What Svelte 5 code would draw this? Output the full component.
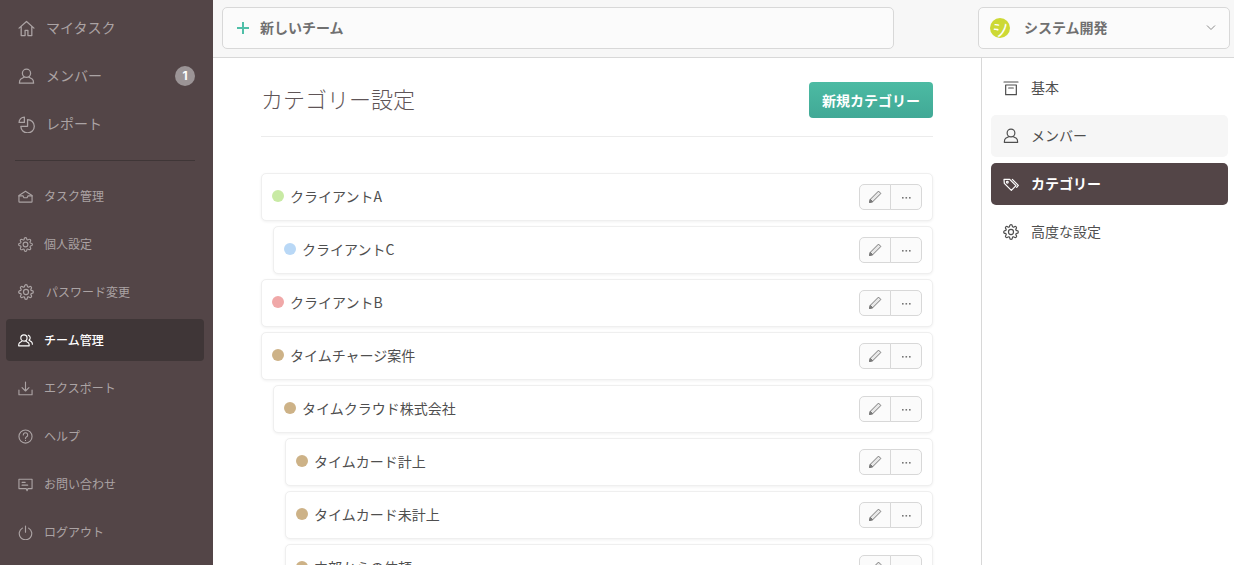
<script>
  const primary = [
    { icon: 'home', label: 'マイタスク' },
    { icon: 'user', label: 'メンバー', badge: 1 },
    { icon: 'pie', label: 'レポート' }
  ];
  const secondary = [
    { icon: 'inbox', label: 'タスク管理' },
    { icon: 'gear', label: '個人設定' },
    { icon: 'gear', label: 'パスワード変更', wide: true },
    { icon: 'team', label: 'チーム管理', active: true },
    { icon: 'download', label: 'エクスポート' },
    { icon: 'help', label: 'ヘルプ' },
    { icon: 'chat', label: 'お問い合わせ' },
    { icon: 'power', label: 'ログアウト' }
  ];
  const categories = [
    { label: 'クライアントA', color: '#c8eaa4', level: 0 },
    { label: 'クライアントC', color: '#b9d8f6', level: 1 },
    { label: 'クライアントB', color: '#f0a8a8', level: 0 },
    { label: 'タイムチャージ案件', color: '#cdb287', level: 0 },
    { label: 'タイムクラウド株式会社', color: '#cdb287', level: 1 },
    { label: 'タイムカード計上', color: '#cdb287', level: 2 },
    { label: 'タイムカード未計上', color: '#cdb287', level: 2 },
    { label: '内部からの依頼', color: '#cdb287', level: 2 }
  ];
  const settings = [
    { icon: 'archive', label: '基本' },
    { icon: 'user', label: 'メンバー', hover: true },
    { icon: 'tag', label: 'カテゴリー', active: true },
    { icon: 'gear', label: '高度な設定' }
  ];
</script>

{#snippet icon(name, size)}
  <svg class="ic" width={size} height={size} viewBox="0 0 24 24" fill="none" stroke="currentColor" stroke-width="1.8" stroke-linecap="round" stroke-linejoin="round">
    {#if name === 'home'}
      <path d="M1.500 11.500 12 2l10.500 9.500M4.500 9V22h5.500v-7.500h4V22h5.500V9" />
    {:else if name === 'user'}
      <circle cx="12" cy="7.500" r="5.800" />
      <path d="M8.500 13 4 15.500C2.500 16.500 2 18 2 21.500h20c0-3.500-.5-5-2-6L15.500 13" />
    {:else if name === 'pie'}
      <path d="M13.500 5a9.500 9.500 0 1 1-9.500 9.500h9.500z" />
      <path d="M9 1.500A7.500 7.500 0 0 0 1.500 9H9z" />
    {:else if name === 'inbox'}
      <path d="M1.500 10.500 12 3.500l10.500 7V20a1 1 0 0 1-1 1h-19a1 1 0 0 1-1-1z" />
      <path d="M1.500 11h6.500l1.500 3h5l1.500-3h6.500" />
    {:else if name === 'gear'}
      <circle cx="12" cy="12" r="3.800" />
      <path d="M19.400 15a1.650 1.650 0 0 0 .33 1.820l.06.06a2 2 0 0 1 0 2.830 2 2 0 0 1-2.830 0l-.06-.06a1.650 1.650 0 0 0-1.820-.33 1.650 1.650 0 0 0-1 1.510V21a2 2 0 0 1-2 2 2 2 0 0 1-2-2v-.09A1.650 1.650 0 0 0 9 19.400a1.650 1.650 0 0 0-1.820.33l-.06.06a2 2 0 0 1-2.830 0 2 2 0 0 1 0-2.830l.06-.06a1.650 1.650 0 0 0 .33-1.820 1.650 1.650 0 0 0-1.510-1H3a2 2 0 0 1-2-2 2 2 0 0 1 2-2h.09A1.650 1.650 0 0 0 4.600 9a1.650 1.650 0 0 0-.33-1.820l-.06-.06a2 2 0 0 1 0-2.830 2 2 0 0 1 2.830 0l.06.06a1.650 1.650 0 0 0 1.820.33H9a1.650 1.650 0 0 0 1-1.510V3a2 2 0 0 1 2-2 2 2 0 0 1 2 2v.09a1.650 1.650 0 0 0 1 1.510 1.650 1.650 0 0 0 1.820-.33l.06-.06a2 2 0 0 1 2.830 0 2 2 0 0 1 0 2.830l-.06.06a1.650 1.650 0 0 0-.33 1.820V9a1.650 1.650 0 0 0 1.510 1H21a2 2 0 0 1 2 2 2 2 0 0 1-2 2h-.09a1.650 1.650 0 0 0-1.510 1z" />
    {:else if name === 'team'}
      <circle cx="9.500" cy="8" r="5" />
      <path d="M6.500 13 2.500 15.500C1.500 16.500 1 18 1 20.500h17c0-2.500-.5-4-1.500-5L12.500 13" />
      <path d="M16.500 3.500a4.500 4.500 0 0 1 1 8l4 2.500c1 .8 1.500 2 1.500 4" />
    {:else if name === 'download'}
      <path d="M12 1.500v14M6.500 10.500l5.500 5.500 5.500-5.500" />
      <path d="M1.500 14.500V22h21v-7.500" />
    {:else if name === 'help'}
      <circle cx="12" cy="12" r="10.500" />
      <path d="M8.500 9.500a3.500 3.500 0 1 1 5.300 3c-1.200.7-1.800 1.300-1.800 2.500" />
      <path d="M12 18v.2" />
    {:else if name === 'chat'}
      <path d="M1.500 3.500h21v15h-6.500l-1.500 3.500-1.500-3.500H1.500z" />
      <path d="M6.500 8.500h5M6.500 13h9" />
    {:else if name === 'power'}
      <path d="M12 1.500v10" />
      <path d="M7 5a10 10 0 1 0 10 0" />
    {:else if name === 'archive'}
      <path d="M1.500 3h21M4 7.500h16V22H4z" />
      <path d="M8.500 12h7" />
    {:else if name === 'tag'}
      <path d="M1.500 5h8.500l9.500 9.500-7 7L2 11z" />
      <path d="M14 5l9 9-2.500 3" />
      <circle cx="6.500" cy="9.500" r="1.300" />
    {/if}
  </svg>
{/snippet}

<div class="shell">
  <aside class="sidebar">
    <nav class="nav">
      {#each primary as item}
        <div class="nav-item big">
          <span class="nav-icon">{@render icon(item.icon, 17)}</span>
          <span class="nav-label">{item.label}</span>
          {#if item.badge}<span class="badge">{item.badge}</span>{/if}
        </div>
      {/each}
    </nav>
    <div class="side-rule"></div>
    <nav class="nav">
      {#each secondary as item}
        <div class="nav-item small" class:active={item.active} class:wide={item.wide}>
          <span class="nav-icon">{@render icon(item.icon, item.wide ? 16 : 15)}</span>
          <span class="nav-label">{item.label}</span>
        </div>
      {/each}
    </nav>
  </aside>

  <div class="body">
    <header class="topbar">
      <div class="new-team">
        <svg width="14" height="14" viewBox="0 0 14 14" stroke="#4fbfa8" stroke-width="2"><path d="M7 1v12M1 7h12" /></svg>
        <span class="lift">新しいチーム</span>
      </div>
      <div class="team-select">
        <span class="logo"><span>シ</span></span>
        <span class="team-name lift">システム開発</span>
        <svg class="chev" width="10" height="6" viewBox="0 0 10 6" fill="none" stroke="#8a8a8a" stroke-width="1"><path d="M1 .5 5 4.500 9 .5" /></svg>
      </div>
    </header>

    <div class="content">
      <main class="main">
        <div class="head">
          <h1>カテゴリー設定</h1>
          <button class="primary">新規カテゴリー</button>
        </div>
        <div class="list">
          {#each categories as cat}
            <div class="row" style="margin-left: {cat.level * 12}px">
              <span class="dot" style="background: {cat.color}"></span>
              <span class="row-label lift">{cat.label}</span>
              <div class="actions">
                <button class="act" aria-label="編集">
                  <svg width="14" height="14" viewBox="0 0 14 14" fill="none" stroke="#7a7a7a" stroke-width="1"><path d="M1.500 12.500l.8-3.200 8.200-8.200 2.400 2.400-8.200 8.200z" fill="#e8e8e8" /><path d="M1.500 12.500l3.200-.8-2.400-2.400z" fill="#7a7a7a" /></svg>
                </button>
                <button class="act more" aria-label="その他">
                  <svg width="9" height="3" viewBox="0 0 9 3" fill="#777"><rect x="0" y="1" width="1.600" height="1.600" /><rect x="3.500" y="1" width="1.600" height="1.600" /><rect x="7" y="1" width="1.600" height="1.600" /></svg>
                </button>
              </div>
            </div>
          {/each}
        </div>
      </main>

      <aside class="panel">
        {#each settings as item}
          <div class="panel-item" class:hover={item.hover} class:active={item.active}>
            <span class="panel-icon">{@render icon(item.icon, 16)}</span>
            <span class="lift">{item.label}</span>
          </div>
        {/each}
      </aside>
    </div>
  </div>
</div>

<style>
  :global(body) {
    margin: 0;
    overflow: hidden;
    background: #fff;
  }
  * {
    box-sizing: border-box;
  }
  .shell {
    display: flex;
    height: 565px;
    overflow: hidden;
    font-family: "Noto Sans CJK JP", "Noto Sans", sans-serif;
    color: #555;
  }
  .ic {
    display: block;
  }
  .lift,
  .nav-label {
    padding-bottom: 2px;
  }

  /* Sidebar */
  .sidebar {
    flex: 0 0 213px;
    background: #534547;
    padding: 7px 9px 0 6px;
    overflow: hidden;
  }
  .nav {
    display: flex;
    flex-direction: column;
    gap: 6px;
  }
  .nav-item {
    display: flex;
    align-items: center;
    flex: 0 0 42px;
    height: 42px;
    border-radius: 4px;
    color: #aba3a4;
  }
  .nav-item.big {
    font-size: 14px;
    padding: 0 9px 0 12px;
  }
  .nav-item.big .nav-icon {
    width: 28px;
  }
  .nav-item.small {
    font-size: 12px;
    padding: 0 12px;
  }
  .nav-item.small .nav-icon {
    width: 26px;
  }
  .nav-item.wide .nav-icon {
    width: 28px;
  }
  .nav-item.active {
    background: #3f3637;
    color: #fff;
    font-weight: 500;
  }
  .badge {
    margin-left: auto;
    width: 20px;
    height: 20px;
    border-radius: 50%;
    background: #9b9496;
    color: #fff;
    font-size: 12px;
    font-weight: 700;
    line-height: 20px;
    text-align: center;
    font-family: "Inter", sans-serif;
  }
  .side-rule {
    height: 1px;
    background: #3f3637;
    margin: 15px 9px 14px;
  }

  /* Top bar */
  .body {
    flex: 1;
    min-width: 0;
    display: flex;
    flex-direction: column;
  }
  .topbar {
    flex: 0 0 58px;
    display: flex;
    justify-content: space-between;
    padding: 7px 4px 0 9px;
    background: #f7f7f7;
    border-bottom: 1px solid #d8d8d8;
  }
  .new-team,
  .team-select {
    height: 42px;
    display: flex;
    align-items: center;
    background: #fbfbfb;
    border: 1px solid #d8d8d8;
    border-radius: 5px;
    color: #707070;
    font-size: 14px;
    font-weight: 700;
  }
  .new-team {
    width: 672px;
    padding-left: 13px;
    gap: 10px;
  }
  .team-select {
    width: 252px;
    padding: 0 13px 0 11px;
  }
  .logo {
    flex: 0 0 20px;
    height: 20px;
    border-radius: 50%;
    background: #cdd935;
    color: #fff;
    display: flex;
    align-items: center;
    justify-content: center;
    font-size: 17px;
    font-weight: 400;
    line-height: 20px;
  }
  .logo span {
    display: block;
    transform: rotate(-25deg);
  }
  .team-name {
    margin-left: 14px;
  }
  .chev {
    margin-left: auto;
  }

  /* Content */
  .content {
    flex: 1;
    display: flex;
    min-height: 0;
  }
  .main {
    flex: 0 0 768px;
    padding: 24px 48px 0;
    overflow: hidden;
  }
  .head {
    display: flex;
    justify-content: space-between;
    align-items: flex-start;
    height: 55px;
    border-bottom: 1px solid #ececec;
  }
  h1 {
    margin: 0;
    font-size: 22px;
    font-weight: 300;
    line-height: 32px;
    color: #5f5557;
  }
  .primary {
    width: 124px;
    height: 36px;
    padding: 0;
    border: 0;
    border-radius: 4px;
    background: linear-gradient(#4cbba3, #41a996);
    color: #fff;
    font: 700 14px "Noto Sans CJK JP", sans-serif;
  }
  .list {
    display: flex;
    flex-direction: column;
    gap: 5px;
    margin-top: 36px;
  }
  .row {
    flex: 0 0 48px;
    height: 48px;
    display: flex;
    align-items: center;
    padding: 0 10px;
    background: #fff;
    border: 1px solid #efefef;
    border-radius: 5px;
    box-shadow: 0 1px 3px rgba(0, 0, 0, 0.06);
  }
  .dot {
    flex: 0 0 12px;
    height: 12px;
    border-radius: 50%;
    margin-right: 6px;
    transform: translateY(-1px);
  }
  .row-label {
    font-size: 14px;
    color: #4f4f4f;
  }
  .actions {
    margin-left: auto;
    display: flex;
  }
  .act {
    height: 26px;
    width: 32px;
    padding: 0;
    display: flex;
    align-items: center;
    justify-content: center;
    background: #fbfbfb;
    border: 1px solid #d8d8d8;
    border-radius: 5px 0 0 5px;
  }
  .act.more {
    margin-left: -1px;
    border-radius: 0 5px 5px 0;
  }

  /* Right panel */
  .panel {
    flex: 1;
    border-left: 1px solid #d8d8d8;
    padding: 9px 6px 0 9px;
    display: flex;
    flex-direction: column;
    gap: 6px;
  }
  .panel-item {
    flex: 0 0 42px;
    height: 42px;
    display: flex;
    align-items: center;
    padding: 0 12px;
    border-radius: 5px;
    font-size: 14px;
    color: #4f4f4f;
  }
  .panel-icon {
    width: 28px;
  }
  .panel-item.hover {
    background: #f6f6f6;
  }
  .panel-item.active {
    background: #534547;
    color: #fff;
    font-weight: 700;
  }
</style>
